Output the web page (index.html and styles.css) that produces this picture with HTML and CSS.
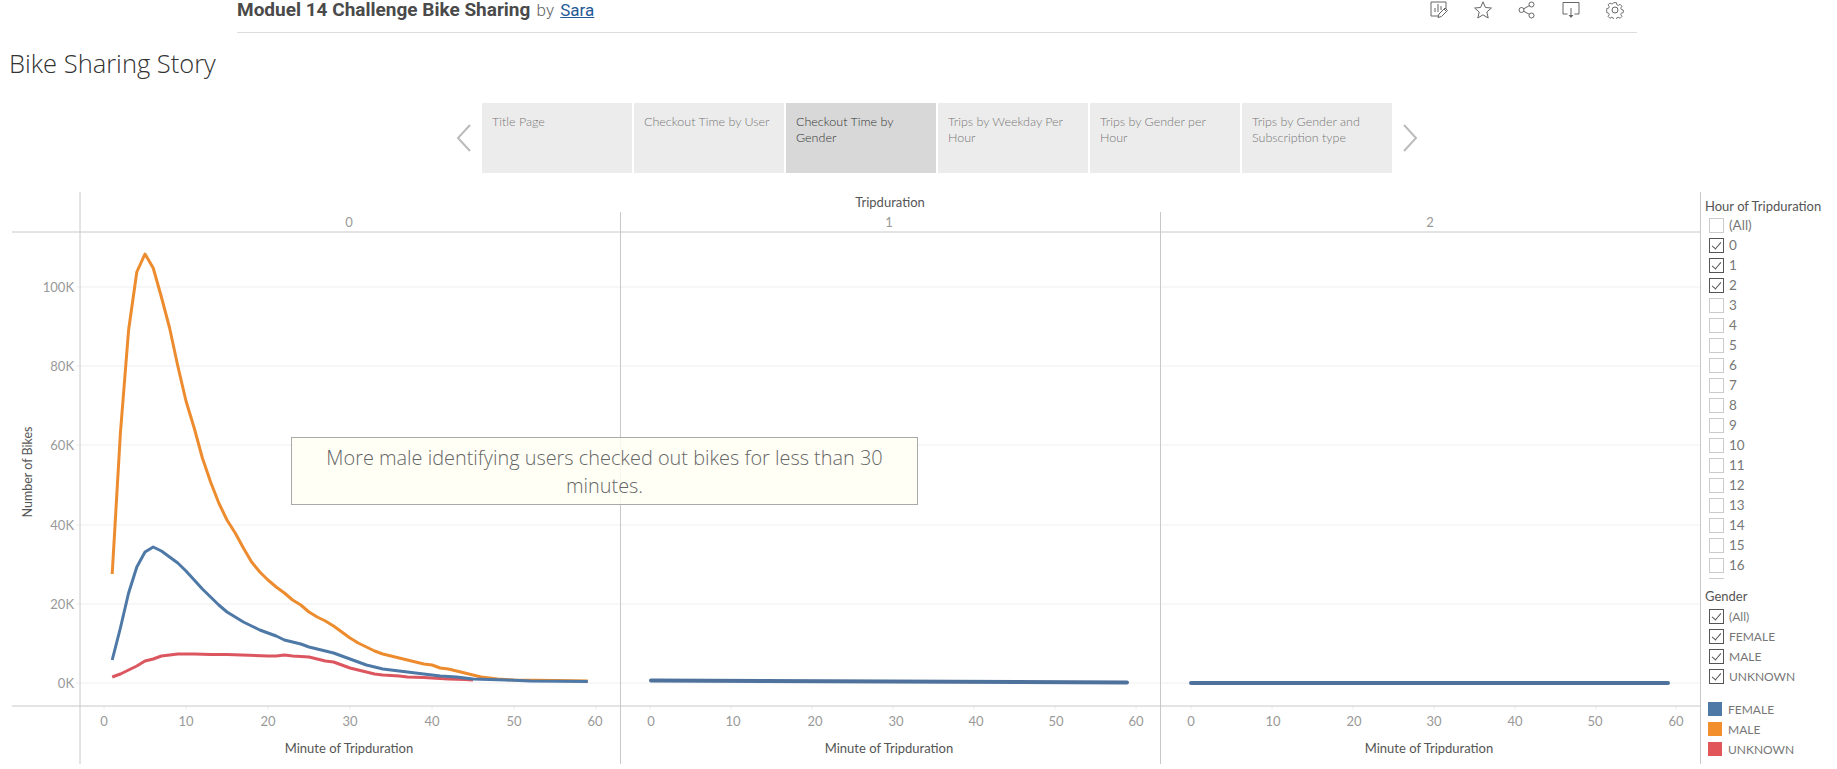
FILE: index.html
```html
<!DOCTYPE html>
<html lang="en">
<head>
<meta charset="UTF-8" />
<title>Bike Sharing Story</title>
<link rel="stylesheet" href="styles.css">
</head>
<body>

<!-- Viz title bar -->
<header class="topbar">
  <div class="viz-title">
    <strong>Moduel 14 Challenge Bike Sharing</strong>
    <span class="by">by</span>
    <a href="#" class="author">Sara</a>
  </div>
  <div class="actions">
    <svg viewBox="0 0 18 18"><path d="M9 15H1V1h15v7"/><path d="M5 11V7M8 11V3M11 9V5"/><path d="M8 16.500l1-3.500 6-6 2.500 2.500-6 6zM14 8l2.500 2.500"/></svg>
    <svg viewBox="0 0 18 18"><path d="M9 .8l2.400 5.700 6 .5-4.600 4 1.400 6L9 13.800 3.800 17l1.400-6-4.600-4 6-.5z"/></svg>
    <svg viewBox="0 0 18 18"><circle cx="3.500" cy="9" r="2.500"/><circle cx="13.500" cy="3.500" r="2.500"/><circle cx="13.500" cy="14.500" r="2.500"/><path d="M5.700 7.800l5.600-3.100M5.700 10.200l5.600 3.100"/></svg>
    <svg viewBox="0 0 18 18"><path d="M5.500 13H1V1.500h16V13h-4.500"/><path d="M9 7v9"/><path class="fill" d="M6.500 14h5L9 17z"/></svg>
    <svg viewBox="0 0 18 18"><circle cx="9" cy="9" r="3"/><path d="M7.500 .8h3l.5 2.400 1.500.7 2.200-1.200 2 2.100-1.300 2 .6 1.600 2.200.6v2.900l-2.200.6-.6 1.600 1.300 2-2 2.100-2.200-1.200-1.500.7-.5 2.400h-3l-.5-2.400-1.500-.7-2.200 1.200-2-2.100 1.300-2-.6-1.600-2.200-.6V7.500l2.200-.6.600-1.600-1.300-2 2-2.100 2.200 1.200 1.500-.7z" transform="translate(.9 .9) scale(.9)"/></svg>
  </div>
</header>

<h1 class="story-title">Bike Sharing Story</h1>

<!-- Story points -->
<nav class="story-nav">
  <svg class="arrow" viewBox="0 0 18 28"><path d="M15 1L3 14l12 13"/></svg>
  <a class="tab">Title Page</a>
  <a class="tab">Checkout Time by User</a>
  <a class="tab active">Checkout Time by Gender</a>
  <a class="tab">Trips by Weekday Per Hour</a>
  <a class="tab">Trips by Gender per Hour</a>
  <a class="tab">Trips by Gender and Subscription type</a>
  <svg class="arrow" viewBox="0 0 18 28"><path d="M3 1l12 13L3 27"/></svg>
</nav>

<main class="story-body">
  <div class="chart">
    <svg class="plot" viewBox="0 192 1700 577">
      <!-- grid -->
      <g class="grid">
        <path d="M80 287H1700M80 366H1700M80 445H1700M80 525H1700M80 604H1700M80 683H1700"/>
      </g>
      <g class="ticks">
        <path d="M76 287h4M76 366h4M76 445h4M76 525h4M76 604h4M76 683h4"/>
        <path d="M104 706v4M186 706v4M268 706v4M350 706v4M432 706v4M514 706v4M596 706v4"/>
        <path d="M650 706v4M731 706v4M812 706v4M893 706v4M974 706v4M1055 706v4M1136 706v4"/>
        <path d="M1191 706v4M1272 706v4M1353 706v4M1434 706v4M1515 706v4M1596 706v4M1676 706v4"/>
      </g>
      <g class="axes">
        <path d="M80 192V764M620.500 212V764M1160.500 212V764"/>
        <path d="M12 232H1700M12 706H1700"/>
      </g>

      <!-- headers -->
      <text class="field" x="890" y="207" text-anchor="middle">Tripduration</text>
      <text class="label" x="349" y="227" text-anchor="middle">0</text>
      <text class="label" x="889" y="227" text-anchor="middle">1</text>
      <text class="label" x="1430" y="227" text-anchor="middle">2</text>

      <!-- y axis -->
      <text class="label" x="74" y="292" text-anchor="end">100K</text>
      <text class="label" x="74" y="371" text-anchor="end">80K</text>
      <text class="label" x="74" y="450" text-anchor="end">60K</text>
      <text class="label" x="74" y="530" text-anchor="end">40K</text>
      <text class="label" x="74" y="609" text-anchor="end">20K</text>
      <text class="label" x="74" y="688" text-anchor="end">0K</text>
      <text class="field side" transform="translate(32 472) rotate(-90)" text-anchor="middle">Number of Bikes</text>

      <!-- x axes -->
      <g class="label" text-anchor="middle">
        <text x="104" y="726">0</text><text x="186" y="726">10</text><text x="268" y="726">20</text><text x="350" y="726">30</text><text x="432" y="726">40</text><text x="514" y="726">50</text><text x="595" y="726">60</text>
        <text x="651" y="726">0</text><text x="733" y="726">10</text><text x="815" y="726">20</text><text x="896" y="726">30</text><text x="976" y="726">40</text><text x="1056" y="726">50</text><text x="1136" y="726">60</text>
        <text x="1191" y="726">0</text><text x="1273" y="726">10</text><text x="1354" y="726">20</text><text x="1434" y="726">30</text><text x="1515" y="726">40</text><text x="1595" y="726">50</text><text x="1676" y="726">60</text>
      </g>
      <g class="field" text-anchor="middle">
        <text x="349" y="753">Minute of Tripduration</text>
        <text x="889" y="753">Minute of Tripduration</text>
        <text x="1429" y="753">Minute of Tripduration</text>
      </g>

      <!-- panel 0 -->
      <polyline class="line male" points="112.200,574 120.400,433 128.600,330 136.800,272 145,254 153.200,268 161.400,297 169.600,328 177.800,366 186,401 194.200,428 202.400,458 210.600,482 218.800,503 227,520 235.200,533 243.400,548 251.600,562 259.800,572 268,580 276.200,587 284.400,593 292.600,600 300.800,605 309,612 317.200,617 325.400,621 333.600,626 341.800,632 350,638 358.200,643 366.400,647 374.600,651 382.800,654 391,656 399.200,658 407.400,660 415.600,662 423.800,664 432,665 440.200,668 448.400,669 456.600,671 464.800,673 473,675 481.200,677 489.400,678 497.600,679 514,680 555,680.500 587.800,681"/>
      <polyline class="line unknown" points="112.200,677 120.400,674 128.600,670 136.800,666 145,661 153.200,659 161.400,656 169.600,655 177.800,654 194.200,654 210.600,654.500 227,654.500 268,656 276.200,656 284.400,655 292.600,656 309,657 317.200,659 325.400,661 333.600,662 341.800,665 350,668 358.200,670 366.400,672 374.600,674 382.800,675 391,675.500 399.200,676 407.400,677 423.800,677.500 432,678 448.400,679 464.800,679.500 473,680"/>
      <polyline class="line female" points="112.200,660 120.400,628 128.600,593 136.800,567 145,552 153.200,547 161.400,551 169.600,557 177.800,563 186,571 194.200,580 202.400,589 210.600,597 218.800,605 227,612 235.200,617 243.400,622 251.600,626 259.800,630 268,633 276.200,636 284.400,640 292.600,642 300.800,644 309,647 317.200,649 325.400,651 333.600,653 341.800,656 350,659 358.200,662 366.400,665 374.600,667 382.800,669 391,670 399.200,671 407.400,672 415.600,673 423.800,674 432,675 440.200,676 448.400,676.500 456.600,677 464.800,678 473,679 489.400,679.500 505.800,680 530.400,681 587.800,681.500"/>

      <!-- panels 1 and 2 -->
      <path class="line flat" d="M651 680.500L890 681.500 1127 682.500"/>
      <path class="line flat" d="M1191 683H1668"/>
    </svg>

    <div class="annotation">More male identifying users checked out bikes for less than 30 minutes.</div>
  </div>

  <aside class="filters">
    <div class="filter-title">Hour of Tripduration</div>
    <ul class="hour-list">
      <li><span class="box"></span>(All)</li>
      <li><span class="box checked"></span>0</li>
      <li><span class="box checked"></span>1</li>
      <li><span class="box checked"></span>2</li>
      <li><span class="box"></span>3</li>
      <li><span class="box"></span>4</li>
      <li><span class="box"></span>5</li>
      <li><span class="box"></span>6</li>
      <li><span class="box"></span>7</li>
      <li><span class="box"></span>8</li>
      <li><span class="box"></span>9</li>
      <li><span class="box"></span>10</li>
      <li><span class="box"></span>11</li>
      <li><span class="box"></span>12</li>
      <li><span class="box"></span>13</li>
      <li><span class="box"></span>14</li>
      <li><span class="box"></span>15</li>
      <li><span class="box"></span>16</li>
      <li><span class="box"></span></li>
    </ul>

    <div class="filter-title gender-title">Gender</div>
    <ul class="gender-list">
      <li><span class="box checked"></span>(All)</li>
      <li><span class="box checked"></span>FEMALE</li>
      <li><span class="box checked"></span>MALE</li>
      <li><span class="box checked"></span>UNKNOWN</li>
    </ul>

    <ul class="legend">
      <li><span class="swatch female"></span>FEMALE</li>
      <li><span class="swatch male"></span>MALE</li>
      <li><span class="swatch unknown"></span>UNKNOWN</li>
    </ul>
  </aside>
</main>

</body>
</html>
```

FILE: styles.css
```css
html, body {
  height: 769px;
  overflow: hidden;
}
body {
  margin: 0;
  background: #fff;
  color: #555;
  font-family: Lato, "Liberation Sans", sans-serif;
}
ul {
  list-style: none;
  margin: 0;
  padding: 0;
}

/* Title bar */
.topbar {
  display: flex;
  justify-content: space-between;
  align-items: center;
  box-sizing: border-box;
  width: 1400px;
  height: 33px;
  margin-left: 237px;
  padding-bottom: 13px;
  border-bottom: 1px solid #ddd;
}
.viz-title {
  font-family: Roboto, sans-serif;
  font-size: 17px;
  white-space: nowrap;
}
.viz-title strong {
  font-size: 19px;
  font-weight: 700;
  color: #4a4a4a;
}
.by {
  margin-left: 2px;
  font-weight: 300;
  color: #666;
}
.author {
  margin-left: 2px;
  color: #1f5a96;
  text-decoration: underline;
}
.actions {
  display: flex;
  gap: 26px;
  margin-right: 13px;
}
.actions svg {
  width: 18px;
  height: 18px;
  fill: none;
  stroke: #666;
  stroke-width: 1;
}
.actions .fill {
  fill: #666;
  stroke: none;
}

.story-title {
  margin: 15px 0 0;
  padding-left: 9px;
  font-family: "Open Sans", sans-serif;
  font-size: 25.500px;
  line-height: 30px;
  font-weight: 300;
  color: #333;
}

/* Story points */
.story-nav {
  display: flex;
  align-items: center;
  gap: 2px;
  height: 70px;
  margin-top: 25px;
  padding-left: 455px;
}
.arrow {
  width: 18px;
  height: 28px;
  margin: 0 7px 0 0;
  fill: none;
  stroke: #bbb;
  stroke-width: 2;
}
.arrow:last-child {
  margin: 0 0 0 7px;
}
.tab {
  box-sizing: border-box;
  width: 150px;
  height: 70px;
  padding: 11px 10px;
  background: #ececec;
  color: #777;
  font-size: 12.500px;
  font-weight: 300;
  line-height: 16px;
}
.tab.active {
  background: #d8d8d8;
  color: #333;
}

/* Chart */
.story-body {
  display: flex;
  height: 577px;
  margin-top: 19px;
}
.chart {
  position: relative;
  flex: none;
  width: 1700px;
}
.plot {
  display: block;
  width: 1700px;
  height: 577px;
}
.grid path {
  fill: none;
  stroke: #efefef;
}
.ticks path {
  fill: none;
  stroke: #eee;
}
.axes path {
  fill: none;
  stroke: #c8c8c8;
}
.label {
  font-size: 13px;
  fill: #999;
}
.field {
  font-size: 13px;
  fill: #555;
}
.field.side {
  font-size: 12.500px;
}
.line {
  fill: none;
  stroke-width: 3;
  stroke-linejoin: round;
}
.line.male { stroke: #ed8c2f; }
.line.female { stroke: #4e79a7; }
.line.unknown { stroke: #dc5660; }
.line.flat {
  stroke: #4f729c;
  stroke-width: 4;
  stroke-linecap: round;
}
.annotation {
  position: absolute;
  left: 291px;
  top: 245px;
  box-sizing: border-box;
  width: 627px;
  height: 68px;
  padding: 6px 30px;
  border: 1px solid #a9a9a9;
  background: rgba(255, 255, 244, 0.85);
  color: #666;
  font-family: "Open Sans", sans-serif;
  font-size: 19.900px;
  font-weight: 300;
  line-height: 28px;
  text-align: center;
}

/* Filters and legend */
.filters {
  box-sizing: border-box;
  width: 137px;
  height: 572px;
  padding: 7px 0 0 4px;
  border-left: 1px solid #c8c8c8;
  color: #777;
}
.filter-title {
  height: 14px;
  margin-bottom: 2px;
  font-size: 13px;
  line-height: 14px;
  color: #555;
  white-space: nowrap;
}
.gender-title {
  margin-top: 10px;
  margin-bottom: 3px;
}
.hour-list {
  height: 364px;
  overflow: hidden;
  font-size: 13.500px;
}
.gender-list, .legend {
  font-size: 12px;
}
.filters li {
  display: flex;
  align-items: center;
  height: 20px;
  white-space: nowrap;
}
.box {
  position: relative;
  box-sizing: border-box;
  width: 15px;
  height: 15px;
  margin: 0 5px 0 4px;
  border: 1px solid #ccc;
}
.box.checked {
  border-color: #555;
}
.box.checked::after {
  content: "";
  position: absolute;
  left: 4px;
  top: 1px;
  width: 4px;
  height: 8px;
  border: solid #555;
  border-width: 0 1px 1px 0;
  transform: rotate(40deg);
}
.legend {
  margin-top: 13px;
}
.swatch {
  width: 14px;
  height: 14px;
  margin: 0 6px 0 3px;
}
.swatch.female { background: #4e79a7; }
.swatch.male { background: #f28e2b; }
.swatch.unknown { background: #e15759; }
```
